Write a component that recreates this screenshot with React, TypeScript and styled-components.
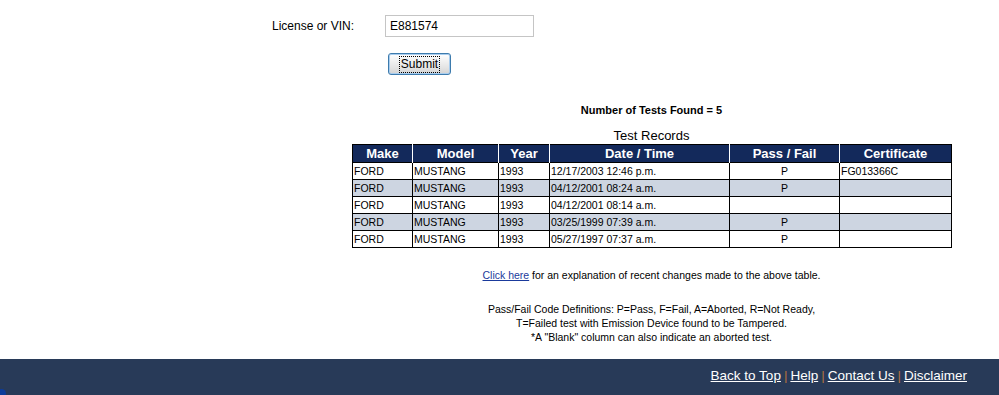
import React from "react";
import styled, { createGlobalStyle } from "styled-components";

const GlobalStyle = createGlobalStyle`
  html, body {
    margin: 0;
    padding: 0;
    background: #ffffff;
    font-family: "Liberation Sans", Arial, sans-serif;
    color: #000;
  }
`;

const StyledPage = styled.div`
  display: flex;
  flex-direction: column;
  min-height: 100vh;
  position: relative;
`;

const StyledForm = styled.form`
  padding: 15px 0 0 272px;
  display: flex;
  flex-direction: column;
`;

const StyledFormRow = styled.div`
  display: flex;
  align-items: center;
  height: 22px;
`;

const StyledLabel = styled.label`
  width: 113px;
  font-size: 12px;
`;

const StyledInput = styled.input`
  box-sizing: border-box;
  width: 149px;
  height: 22px;
  border: 1px solid #c5c5c5;
  padding: 0 4px;
  font-family: "Liberation Sans", Arial, sans-serif;
  font-size: 12px;
  color: #000;
  outline: none;
`;

const StyledButton = styled.button`
  box-sizing: border-box;
  margin: 16px 0 0 116px;
  width: 63px;
  height: 22px;
  border: 1px solid #3d7bad;
  border-radius: 3px;
  background: linear-gradient(#ffffff, #e3e3e3 70%, #d2d2d2);
  box-shadow: inset 0 0 0 1px #a9cdee;
  font-family: "Liberation Sans", Arial, sans-serif;
  font-size: 12px;
  padding: 0;
  display: flex;
  align-items: center;
  justify-content: center;
`;

const StyledFocus = styled.span`
  outline: 1px dotted #000;
  padding: 0 1px;
  line-height: 15px;
`;

const StyledResults = styled.section`
  margin: 29px 0 0 352px;
  width: 599px;
  text-align: center;
`;

const StyledCount = styled.div`
  font-size: 11px;
  font-weight: bold;
  line-height: 13px;
`;

const StyledCaption = styled.div`
  margin-top: 11px;
  font-size: 13px;
  line-height: 16px;
`;

const StyledTable = styled.table`
  width: 599px;
  border-collapse: collapse;
  border: 1px solid #000;
  table-layout: fixed;
`;

const StyledTh = styled.th`
  background: #13295b;
  color: #fff;
  font-size: 13px;
  font-weight: bold;
  height: 17px;
  line-height: 16px;
  padding: 0;
  border-left: 1px solid #fff;
  &:first-child {
    border-left: 1px solid #000;
  }
`;

const StyledRow = styled.tr<{ $alt: boolean }>`
  background: ${(p) => (p.$alt ? "#cdd5e1" : "#ffffff")};
`;

const StyledTd = styled.td<{ $center?: boolean }>`
  border: 1px solid #000;
  height: 16px;
  line-height: 15px;
  padding: 0 1px;
  font-size: 10.5px;
  text-align: ${(p) => (p.$center ? "center" : "left")};
  white-space: nowrap;
  overflow: hidden;
`;

const StyledNote = styled.p`
  margin: 0;
  font-size: 10.5px;
  line-height: 14px;
`;

const StyledLink = styled.a`
  color: #1a3a9c;
  text-decoration: underline;
`;

const StyledNotes = styled.div<{ $gap: number }>`
  margin-top: ${(p) => p.$gap}px;
`;

const StyledFooter = styled.footer`
  margin-top: auto;
  height: 36px;
  box-sizing: border-box;
  padding: 0 32px 3px 0;
  background: #283a58;
  display: flex;
  align-items: center;
  justify-content: flex-end;
  font-size: 13.5px;
  color: #fff;
  position: relative;
`;

const StyledFooterLink = styled.a`
  color: #fff;
  text-decoration: underline;
`;

const StyledSep = styled.span`
  color: #b0723f;
  margin: 0 3px;
`;

const StyledCorner = styled.span`
  position: absolute;
  left: -3px;
  bottom: -3px;
  width: 9px;
  height: 9px;
  border-radius: 50%;
  background: #0d3c9a;
`;

const columns = [
  { name: "Make", w: 60 },
  { name: "Model", w: 86 },
  { name: "Year", w: 51 },
  { name: "Date / Time", w: 180 },
  { name: "Pass / Fail", w: 110 },
  { name: "Certificate", w: 112 },
];

const records = [
  ["FORD", "MUSTANG", "1993", "12/17/2003 12:46 p.m.", "P", "FG013366C"],
  ["FORD", "MUSTANG", "1993", "04/12/2001 08:24 a.m.", "P", ""],
  ["FORD", "MUSTANG", "1993", "04/12/2001 08:14 a.m.", "", ""],
  ["FORD", "MUSTANG", "1993", "03/25/1999 07:39 a.m.", "P", ""],
  ["FORD", "MUSTANG", "1993", "05/27/1997 07:37 a.m.", "P", ""],
];

const footerLinks = ["Back to Top", "Help", "Contact Us", "Disclaimer"];

const App = () => {
  return (
    <StyledPage>
      <GlobalStyle />
      <StyledForm onSubmit={(e) => e.preventDefault()}>
        <StyledFormRow>
          <StyledLabel htmlFor="vin">License or VIN:</StyledLabel>
          <StyledInput id="vin" defaultValue="E881574" />
        </StyledFormRow>
        <StyledButton type="submit">
          <StyledFocus>Submit</StyledFocus>
        </StyledButton>
      </StyledForm>

      <StyledResults>
        <StyledCount>Number of Tests Found = 5</StyledCount>
        <StyledCaption>Test Records</StyledCaption>
        <StyledTable>
          <colgroup>
            {columns.map((c) => (
              <col key={c.name} style={{ width: c.w }} />
            ))}
          </colgroup>
          <thead>
            <tr>
              {columns.map((c) => (
                <StyledTh key={c.name}>{c.name}</StyledTh>
              ))}
            </tr>
          </thead>
          <tbody>
            {records.map((r, i) => (
              <StyledRow key={i} $alt={i % 2 === 1}>
                {r.map((cell, j) => (
                  <StyledTd key={j} $center={j === 4}>
                    {cell}
                  </StyledTd>
                ))}
              </StyledRow>
            ))}
          </tbody>
        </StyledTable>

        <StyledNotes $gap={20}>
          <StyledNote>
            <StyledLink href="#">Click here</StyledLink> for an explanation of
            recent changes made to the above table.
          </StyledNote>
        </StyledNotes>
        <StyledNotes $gap={20}>
          <StyledNote>
            Pass/Fail Code Definitions: P=Pass, F=Fail, A=Aborted, R=Not Ready,
          </StyledNote>
          <StyledNote>
            T=Failed test with Emission Device found to be Tampered.
          </StyledNote>
          <StyledNote>*A "Blank" column can also indicate an aborted test.</StyledNote>
        </StyledNotes>
      </StyledResults>

      <StyledFooter>
        <StyledCorner />
        {footerLinks.map((l, i) => (
          <React.Fragment key={l}>
            {i > 0 && <StyledSep>|</StyledSep>}
            <StyledFooterLink href="#">{l}</StyledFooterLink>
          </React.Fragment>
        ))}
      </StyledFooter>
    </StyledPage>
  );
};

export default App;
